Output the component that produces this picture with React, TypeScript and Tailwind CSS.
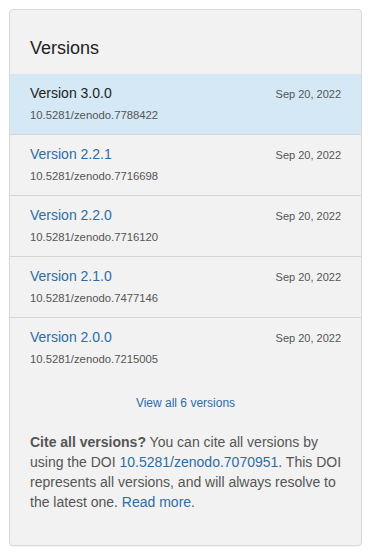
const versions = [
  { name: "Version 3.0.0", doi: "10.5281/zenodo.7788422", date: "Sep 20, 2022", current: true },
  { name: "Version 2.2.1", doi: "10.5281/zenodo.7716698", date: "Sep 20, 2022" },
  { name: "Version 2.2.0", doi: "10.5281/zenodo.7716120", date: "Sep 20, 2022" },
  { name: "Version 2.1.0", doi: "10.5281/zenodo.7477146", date: "Sep 20, 2022" },
  { name: "Version 2.0.0", doi: "10.5281/zenodo.7215005", date: "Sep 20, 2022" },
];

export default function App() {
  return (
    <div
      className="min-h-[554px] bg-white pt-[9px] pl-[9px]"
      style={{ fontFamily: '"Liberation Sans", Arial, sans-serif' }}
    >
      <div className="w-[353px] h-[537px] rounded-[4px] border border-[#d9d9d9] bg-[#f2f2f2] shadow-[0_1px_1px_rgba(0,0,0,0.05)] overflow-hidden">
        <div className="h-[64px] px-5 pt-[26px]">
          <h2 className="text-[18px] leading-[24px] text-[#222]">Versions</h2>
        </div>

        <ul>
          {versions.map((v, i) => (
            <li
              key={v.doi}
              className={`h-[61px] px-5 pt-[9px] ${i < versions.length - 1 ? "border-b border-[#d6d6d6]" : ""} ${v.current ? "bg-[#d4e8f6]" : ""}`}
            >
              <div className="flex items-baseline justify-between">
                <span className={`text-[14px] leading-[20px] ${v.current ? "text-[#222]" : "text-[#2d6ca8]"}`}>
                  {v.name}
                </span>
                <span className="text-[11px] leading-[16px] text-[#555]">{v.date}</span>
              </div>
              <div className="mt-[4px] text-[11.3px] leading-[16px] text-[#555]">{v.doi}</div>
            </li>
          ))}
        </ul>

        <div className="mt-[16px] text-center text-[12px] leading-[16px] text-[#2d6ca8]">View all 6 versions</div>

        <p className="mt-[21px] pl-5 pr-[14px] text-[14px] leading-[20px] text-[#555]">
          <strong className="font-bold">Cite all versions?</strong> You can cite all versions by using the DOI{" "}
          <span className="text-[#2d6ca8]">10.5281/zenodo.7070951</span>. This DOI represents all versions, and will
          always resolve to the latest one. <span className="text-[#2d6ca8]">Read more</span>.
        </p>
      </div>
    </div>
  );
}
